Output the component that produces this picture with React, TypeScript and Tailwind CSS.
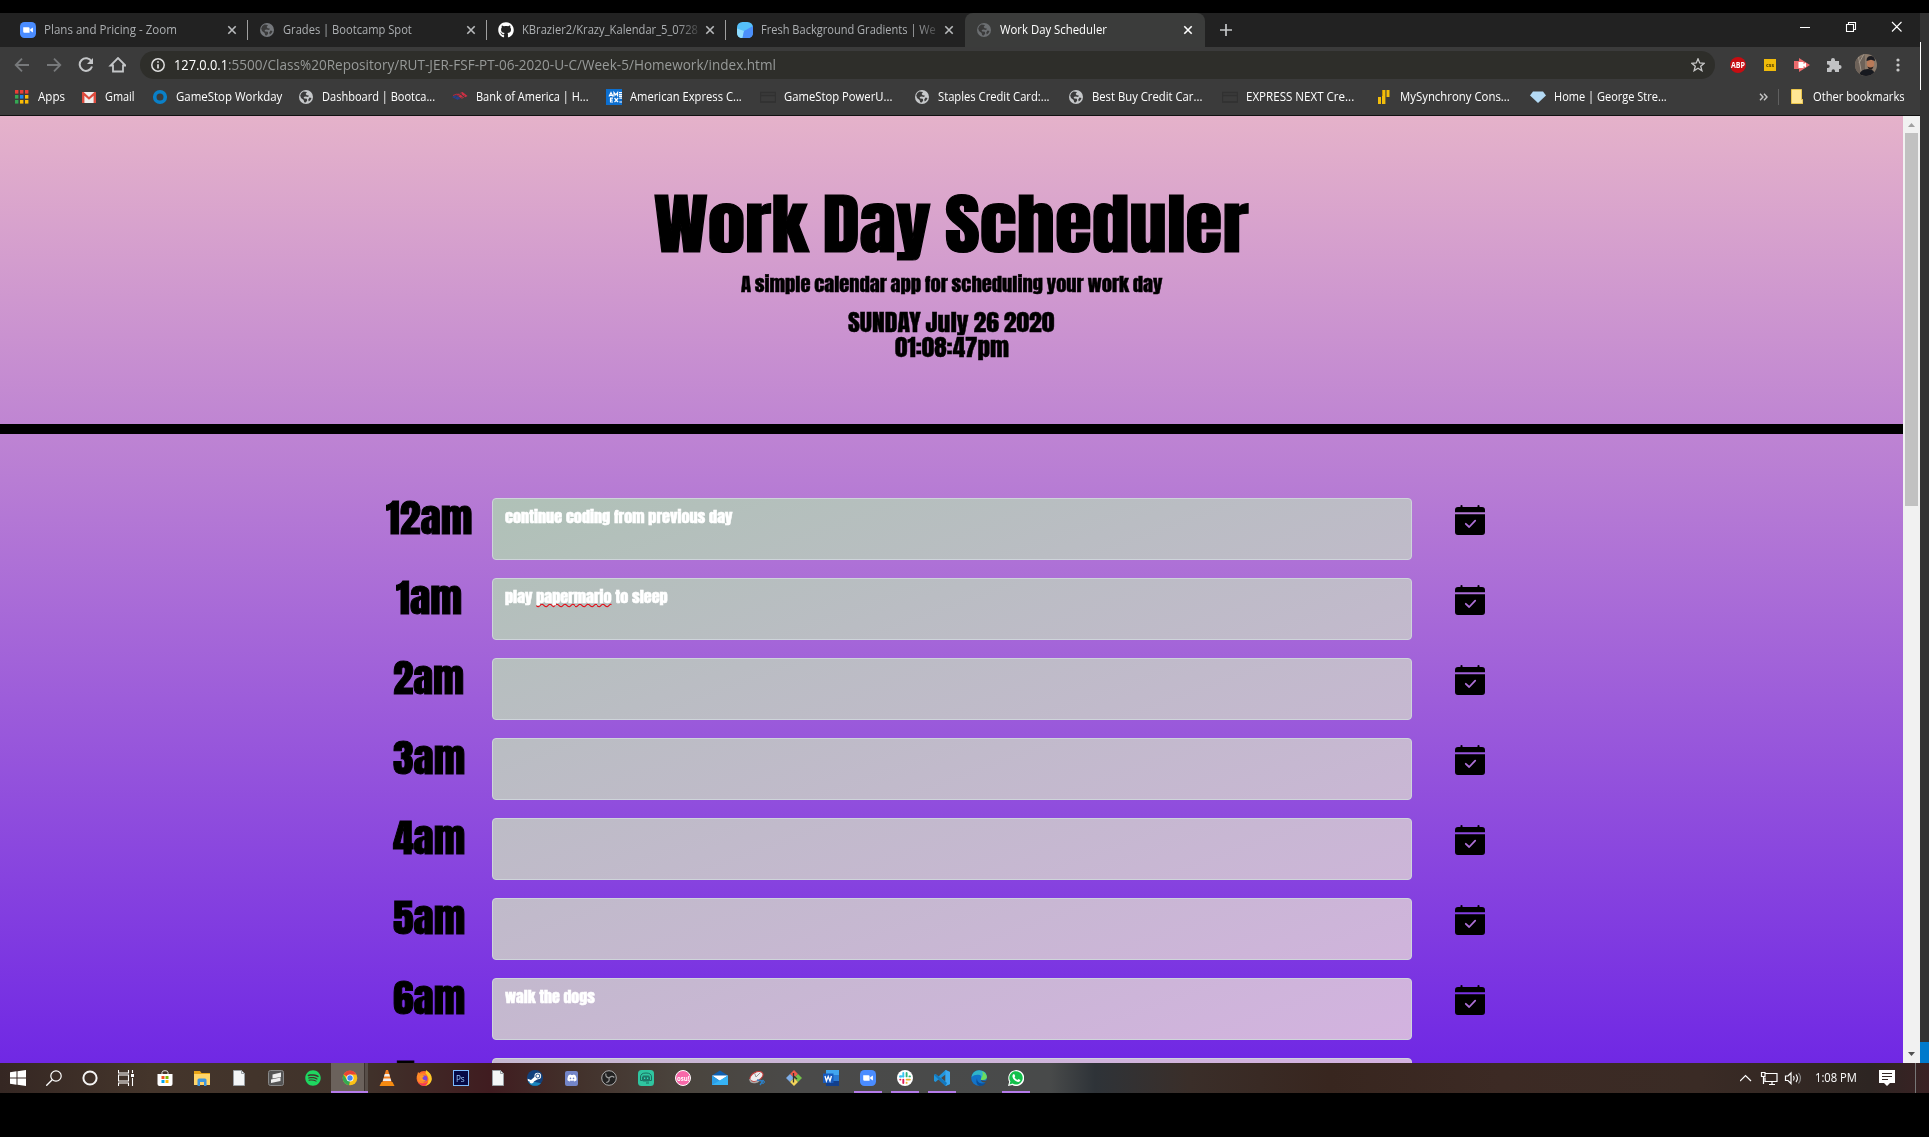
import { useLayoutEffect, useRef } from "react";
import type { ReactNode } from "react";
import { FaGithub, FaSpotify, FaWhatsapp, FaSteam, FaDiscord } from "react-icons/fa";

/* Text stretched horizontally to an exact width. */
function Fit({ w, className = "", children }: { w: number; className?: string; children: ReactNode }) {
  const ref = useRef<HTMLSpanElement>(null);
  useLayoutEffect(() => {
    const el = ref.current;
    if (el) el.style.transform = `scaleX(${w / el.offsetWidth})`;
  }, [w]);
  return (
    <span className={`block shrink-0 whitespace-nowrap ${className}`} style={{ width: w }}>
      <span ref={ref} className="inline-block origin-left">{children}</span>
    </span>
  );
}

const ui = "font-['Open_Sans',sans-serif]";
const impact = "font-['Anton','Roboto_Condensed',sans-serif]";

/* ---------- small icons ---------- */
const Globe = ({ c }: { c: string }) => (
  <svg width="16" height="16" viewBox="0 0 16 16">
    <circle cx="8" cy="8" r="7" fill={c} />
    <path d="M2.200 6.500Q3 3.500 5.500 2.600L9 3 7.600 5l1.200 1.200 2 .4-.6 1.400-2.600-.6-2 .6.6 1.400 2.600.4.4 1.600-1.400 2.200-1.600-.4-.6-2.200L3 9Z" fill="#3a3a3a" />
    <path d="M11.500 8.600l2 .4q-.6 2.400-2.700 3.600l-.6-1.800Z" fill="#3a3a3a" />
  </svg>
);
const ZoomIcon = ({ s = 16 }: { s?: number }) => (
  <svg width={s} height={s} viewBox="0 0 16 16">
    <rect width="16" height="16" rx="4.500" fill="#4a8cff" />
    <path d="M3.200 5.300h5.200q1.200 0 1.200 1.200v4.200H4.400q-1.200 0-1.200-1.200ZM10.200 7.200l2.700-1.700v5l-2.700-1.700Z" fill="#fff" />
  </svg>
);
const Gradients = () => (
  <svg width="16" height="16" viewBox="0 0 16 16">
    <rect width="16" height="16" rx="5.500" fill="#55c0fa" />
    <path d="M0 6.500 7 9 5.500 16Q0 16 0 10.500Z" fill="#8fdcff" />
    <path d="M7 9 16 4v6.500Q16 16 10.500 16h-5Z" fill="#4b8ffb" />
  </svg>
);
const CloseX = ({ c }: { c: string }) => (
  <svg width="10" height="10" viewBox="0 0 10 10"><path d="M1.300 1.300l7.400 7.400M8.700 1.300 1.300 8.700" stroke={c} strokeWidth="1.600" /></svg>
);
const AppsIcon = () => (
  <svg width="16" height="16" viewBox="0 0 16 16">
    {["#ea3f35", "#ea3f35", "#ea3f35", "#34a853", "#1a86f0", "#fbbc05", "#34a853", "#fbbc05", "#fbbc05"].map((c, i) => (
      <rect key={i} x={1 + (i % 3) * 5} y={1 + Math.floor(i / 3) * 5} width="3.400" height="3.600" fill={c} />
    ))}
  </svg>
);
const GmailIcon = () => (
  <svg width="16" height="16" viewBox="0 0 16 16">
    <path d="M1 3h14v11H1Z" fill="#efefef" />
    <path d="M1 3h1.600L8 8l5.400-5H15v11h-2.400V6.800L8 10.800 3.400 6.800V14H1Z" fill="#dd4b3e" />
  </svg>
);
const Ring = () => (
  <svg width="16" height="16" viewBox="0 0 16 16"><circle cx="8" cy="8" r="5.300" fill="none" stroke="#0a80c8" strokeWidth="3.600" /></svg>
);
const Boa = () => (
  <svg width="16" height="16" viewBox="0 0 16 16">
    <path d="M0 8 4 6l5 3.500-3 1.500Z" fill="#27408b" />
    <path d="M4.500 5.800 7 4.500l5 4L9.800 9.800ZM8 4l2.500-1L15.500 7l-2.300 1.200Z" fill="#d02f44" />
    <path d="M6 11l7-4.500M3 8.500l7-4" stroke="#3b3b3b" strokeWidth=".7" />
    <path d="M1 6.500 5 5l2 1" fill="none" stroke="#b52a3c" />
  </svg>
);
const Amex = () => (
  <svg width="16" height="16" viewBox="0 0 16 16">
    <rect width="16" height="16" fill="#0c6fd0" />
    <path d="M3 7.500 5 3.500l2 4M3.800 6.300h2.400M8 7.500v-4l1.800 2.400 1.800-2.400v4M13 3.700h3M13 5.600h3M13 7.300h3M4 9.200h3M4 11.200h2.600M4 13h3M4.500 9v4M8.500 9l3.600 4.200M12.100 9l-3.600 4.200M13.300 9.200H16M13.300 13H16" stroke="#fff" strokeWidth="1.200" fill="none" />
  </svg>
);
const Card = () => (
  <svg width="16" height="16" viewBox="0 0 16 16"><path d="M.5 3.500h15v9.500H.5ZM.5 6.500h15" fill="none" stroke="#313131" strokeWidth="1.300" /></svg>
);
const Synchrony = () => (
  <svg width="16" height="16" viewBox="0 0 16 16"><path d="M2 8h3v7H2ZM6 1h3.400v14H6ZM10.500 1h3v7h-3Z" fill="#f2bd0b" /><path d="M6 1h1v6H6Z" fill="#c89600" /></svg>
);
const Gem = () => (
  <svg width="16" height="16" viewBox="0 0 16 16"><path d="M3 2.500h10l3 4-8 7.500-8-7.500Z" fill="#b4daf5" /></svg>
);
const Folder = () => (
  <svg width="12" height="15" viewBox="0 0 12 15">
    <path d="M.5.5h10v10h1.400v4H.5Z" fill="#ffe694" stroke="#eac54c" />
  </svg>
);

/* ---------- browser tabs ---------- */
type TabInfo = { icon: ReactNode; title: string; w: number; clip?: boolean; sep?: boolean };
const tabs: TabInfo[] = [
  { icon: <ZoomIcon />, title: "Plans and Pricing - Zoom", w: 133, sep: true },
  { icon: <Globe c="#75787c" />, title: "Grades | Bootcamp Spot", w: 129, sep: true },
  { icon: <FaGithub size={16} color="#fff" />, title: "KBrazier2/Krazy_Kalendar_5_0728", w: 176, clip: true, sep: true },
  { icon: <Gradients />, title: "Fresh Background Gradients | We", w: 175, clip: true },
];

function TabStrip() {
  return (
    <div className="flex h-[34px] bg-[#222222]">
      <div className="flex pl-[9px]">
        {tabs.map((t) => (
          <div key={t.title} className="flex w-[239px] items-center">
            <div className="ml-[11px] w-6 shrink-0">{t.icon}</div>
            <div className={`w-[180px] text-[#acafb2] ${t.clip ? "[mask-image:linear-gradient(to_right,#000_155px,transparent_182px)]" : ""}`}>
              <Fit w={t.w} className="text-[12px]">{t.title}</Fit>
            </div>
            <div className="ml-[3px] w-5"><CloseX c="#b9bbbd" /></div>
            {t.sep && <div className="h-5 w-px shrink-0 bg-[#a0a0a0]" />}
          </div>
        ))}
      </div>
      <div className="flex w-[240px] items-center rounded-t-lg bg-[#3b3c3b] pl-[11px]">
        <div className="w-6"><Globe c="#6c6f72" /></div>
        <div className="w-[183px] text-white"><Fit w={107} className="text-[12px]">Work Day Scheduler</Fit></div>
        <CloseX c="#fff" />
      </div>
      <svg className="ml-[14px] mt-[10px]" width="14" height="14" viewBox="0 0 14 14"><path d="M7 1v12M1 7h12" stroke="#c4c6c8" strokeWidth="1.700" /></svg>
      <div className="ml-auto flex pt-[8px] pr-[18px]">
        <svg width="102" height="12" viewBox="0 0 102 12" fill="none" stroke="#fff" strokeWidth="1.100">
          <path d="M0 6.500h10M46.500 3.500h7v7h-7ZM48.500 3V1.500h7v7H54M92 1l9.500 9.500M101.500 1 92 10.500" />
        </svg>
      </div>
    </div>
  );
}

/* ---------- toolbar ---------- */
function Toolbar() {
  return (
    <div className="flex h-[36px] items-center bg-[#3b3b3b]">
      <svg className="ml-[14px]" width="112" height="16" viewBox="0 0 112 16" fill="none" strokeWidth="1.800">
        <path d="M15 8H2M8 1.700 1.700 8 8 14.300" stroke="#77797b" />
        <path d="M33 8h13M40 1.700 46.300 8 40 14.300" stroke="#77797b" />
        <path d="M77.500 4.500A6.300 6.300 0 1 0 78 9.500" stroke="#c4c6c8" strokeWidth="2" />
        <path d="M79 1v6h-6Z" fill="#c4c6c8" />
        <path d="M99 14.500v-6h-2.500L104 1l7.500 7.500H109v6Z" stroke="#c4c6c8" />
      </svg>
      <div className="ml-[14px] flex h-[28px] w-[1575px] items-center rounded-full bg-[#2e2e2a]">
        <svg className="ml-[11px] mr-[9px] shrink-0" width="14" height="14" viewBox="0 0 14 14">
          <circle cx="7" cy="7" r="6.200" fill="none" stroke="#dedede" strokeWidth="1.500" />
          <path d="M7 6.200v4.300M7 3.200v1.600" stroke="#dedede" strokeWidth="1.700" />
        </svg>
        <Fit w={54} className="text-[14px] leading-[20px] text-white">127.0.0.1</Fit>
        <Fit w={548} className="text-[14px] leading-[20px] text-[#979a99]">:5500/Class%20Repository/RUT-JER-FSF-PT-06-2020-U-C/Week-5/Homework/index.html</Fit>
        <svg className="ml-auto mr-[10px]" width="14" height="14" viewBox="0 0 14 14">
          <path d="M7 .8l1.700 4.200 4.500.3-3.500 2.900 1.200 4.500L7 10.200l-3.900 2.500 1.200-4.500L.8 5.300l4.500-.3Z" fill="none" stroke="#c8c8c8" strokeWidth="1.300" />
        </svg>
      </div>
      <div className="ml-[15px] flex h-4 w-4 items-center justify-center rounded-full bg-[#c70d12]">
        <Fit w={14} className="text-[8px] font-bold leading-none text-white">ABP</Fit>
      </div>
      <div className="ml-[18px] flex h-[12px] w-[12px] items-center justify-center bg-[#f0bb0a]">
        <Fit w={8} className="text-[6px] font-bold leading-none text-[#4c3b00]">css</Fit>
      </div>
      <svg className="ml-[18px]" width="16" height="14" viewBox="0 0 16 14">
        <path d="M0 3h5V0l11 7-11 7v-3H0Z" fill="#ec6a6c" /><path d="M4.500 4h5v2L12 4.500v5L9.500 8v2h-5Z" fill="#fff" />
      </svg>
      <svg className="ml-[16px]" width="16" height="16" viewBox="0 0 16 16">
        <path d="M1 4h4V3a2 2 0 0 1 4 0v1h4v4h.6a2 2 0 0 1 0 4H13v3H9v-1a1.700 1.700 0 0 0-3.400 0v1H1v-4h1a1.700 1.700 0 0 0 0-3.400H1Z" fill="#c1c2c4" />
      </svg>
      <svg className="ml-[13px]" width="22" height="22" viewBox="0 0 22 22">
        <clipPath id="avatar"><circle cx="11" cy="11" r="11" /></clipPath>
        <g clipPath="url(#avatar)">
          <rect width="22" height="22" fill="#8a7a6b" />
          <path d="M0 6 10 1v18H0Z" fill="#6d6259" />
          <path d="M3 0l4 22M9 0 4 9" stroke="#a3978a" />
          <path d="M4 22q1-7 9-7 7 0 7 7Z" fill="#17191f" />
          <ellipse cx="15.500" cy="9.500" rx="3.800" ry="5" fill="#b97a58" />
          <path d="M11.500 7q0-5 4.500-5 4 0 4 5l-4-1.200Z" fill="#1b1c22" />
          <path d="M12.500 12.500q3 2 6 0l-1.500 3h-3Z" fill="#251c1a" />
        </g>
      </svg>
      <svg className="ml-[19px]" width="4" height="14" viewBox="0 0 4 14" fill="#c8c8c8"><circle cx="2" cy="2" r="1.600" /><circle cx="2" cy="7" r="1.600" /><circle cx="2" cy="12" r="1.600" /></svg>
    </div>
  );
}

/* ---------- bookmarks ---------- */
const bookmarks: [ReactNode, string, number, string][] = [
  [<AppsIcon />, "Apps", 27, "w-[67px]"],
  [<GmailIcon />, "Gmail", 30, "w-[71px]"],
  [<Ring />, "GameStop Workday", 106, "w-[146px]"],
  [<Globe c="#c6c8ca" />, "Dashboard | Bootca...", 113, "w-[154px]"],
  [<Boa />, "Bank of America | H...", 113, "w-[154px]"],
  [<Amex />, "American Express C...", 112, "w-[154px]"],
  [<Card />, "GameStop PowerU...", 108, "w-[154px]"],
  [<Globe c="#c6c8ca" />, "Staples Credit Card:...", 112, "w-[154px]"],
  [<Globe c="#c6c8ca" />, "Best Buy Credit Car...", 110, "w-[154px]"],
  [<Card />, "EXPRESS NEXT Cre...", 108, "w-[154px]"],
  [<Synchrony />, "MySynchrony Cons...", 110, "w-[154px]"],
  [<Gem />, "Home | George Stre...", 113, "w-[154px]"],
];

function Bookmarks() {
  return (
    <div className="flex h-[33px] items-center border-b border-[#111] bg-[#3b3b3b] pb-[5px] pl-[14px] text-[12px] text-white">
      {bookmarks.map(([icon, label, w, cls]) => (
        <div key={label} className={`flex shrink-0 items-center gap-2 ${cls}`}>{icon}<Fit w={w}>{label}</Fit></div>
      ))}
      <svg className="ml-[75px]" width="9" height="8" viewBox="0 0 9 8"><path d="M1 .8 4 4 1 7.200M5 .8 8 4 5 7.200" fill="none" stroke="#c8c8c8" strokeWidth="1.400" /></svg>
      <div className="ml-[10px] h-4 w-px bg-[#606060]" />
      <div className="ml-3 flex items-center gap-[10px]"><Folder /><Fit w={92}>Other bookmarks</Fit></div>
    </div>
  );
}

/* ---------- scheduler page ---------- */
const hours: [string, number, ReactNode][] = [
  ["12am", 86, <Fit w={228}>continue coding from previous day</Fit>],
  ["1am", 66, <Fit w={163}>play <span className="underline decoration-red-600 decoration-wavy decoration-[0.8px] underline-offset-0 [text-decoration-skip-ink:none]">papermario</span> to sleep</Fit>],
  ["2am", 71, null],
  ["3am", 72, null],
  ["4am", 72, null],
  ["5am", 72, null],
  ["6am", 72, <Fit w={90}>walk the dogs</Fit>],
  ["7am", 66, null],
];

const SaveIcon = () => (
  <svg width="30" height="30" viewBox="0 0 30 30">
    <path d="M5.500 2V.8q0-.8 1-.8t1 .8V2h15V.8q0-.8 1-.8t1 .8V2H27q3 0 3 3v2.200H0V5q0-3 3-3ZM0 9.300h30V27q0 3-3 3H3q-3 0-3-3Z" />
    <path d="M10.800 18.800l3.400 3.200 6-6.400" fill="none" stroke="#ae70d8" strokeWidth="1.800" strokeLinecap="round" strokeLinejoin="round" />
  </svg>
);

function Page() {
  return (
    <div className={`h-[947px] w-[1903px] overflow-hidden bg-[linear-gradient(to_top,#7028e4,#e5b2ca)] text-black ${impact}`}>
      <header className="flex h-[318px] flex-col items-center border-b-[10px] border-black pt-[63px]">
        <Fit w={595} className="text-[66px] leading-[90px] [word-spacing:-3px] [-webkit-text-stroke:1.2px_#000]">Work Day Scheduler</Fit>
        <Fit w={422} className="text-[18.5px] leading-[30px] [word-spacing:-1px] [-webkit-text-stroke:0.4px_#000]">A simple calendar app for scheduling your work day</Fit>
        <Fit w={207} className="mt-[11px] text-[22.7px] leading-[25px] [word-spacing:-1px] [-webkit-text-stroke:0.4px_#000]">SUNDAY July 26 2020</Fit>
        <Fit w={114} className="text-[22.7px] leading-[25px] [-webkit-text-stroke:0.4px_#000]">01:08:47pm</Fit>
      </header>
      <main className="flex flex-col gap-[18px] pt-16">
        {hours.map(([h, w, note]) => (
          <div key={h} className="flex h-[62px] shrink-0 pl-[365px]">
            <div className="flex w-[127px] justify-center">
              <Fit w={w} className="text-[37px] leading-[41px] [-webkit-text-stroke:0.9px_#000]">{h}</Fit>
            </div>
            <div className="w-[920px] rounded border border-[#ced4da] bg-[linear-gradient(160deg,rgb(153,203,157),rgb(219,175,233))] bg-fixed bg-[size:1903px_947px] bg-[position:0_116px] pl-3 pt-[6px] text-[14.8px] leading-[24px] text-white [-webkit-text-stroke:0.5px_#fff]">
              {note}
            </div>
            <div className="ml-[43px] pt-[7px]"><SaveIcon /></div>
          </div>
        ))}
      </main>
    </div>
  );
}

function Scrollbar() {
  return (
    <div className="flex h-[947px] w-[17px] flex-col items-center bg-[#f1f1f1]">
      <svg width="17" height="17" viewBox="0 0 17 17"><path d="M5 11h7L8.500 7Z" fill="#a0a0a0" /></svg>
      <div className="h-[373px] w-[13px] bg-[#c1c1c1]" />
      <svg className="mt-auto" width="17" height="17" viewBox="0 0 17 17"><path d="M5 6h7l-3.500 4Z" fill="#505050" /></svg>
    </div>
  );
}

/* ---------- taskbar ---------- */
const File = () => <svg width="12" height="16" viewBox="0 0 12 16"><path d="M.5.5h8l3 3v12H.5Z" fill="#f4f6f7" stroke="#9aa0a5" /><path d="M8.500.5v3h3" fill="none" stroke="#9aa0a5" /></svg>;
const S = ({ children }: { children: ReactNode }) => <svg width="16" height="16" viewBox="0 0 16 16">{children}</svg>;

const systemIcons: ReactNode[] = [
  <S><path d="M0 2.300 6.500 1.300V7.500H0ZM7.500 1.200 16 0v7.500H7.500ZM0 8.500h6.500v6.200L0 13.800ZM7.500 8.500H16V16l-8.500-1.200Z" fill="#fff" /></S>,
  <S><circle cx="10" cy="6" r="5.200" fill="none" stroke="#fff" strokeWidth="1.200" /><path d="M6.200 9.800.3 15.700" stroke="#fff" strokeWidth="1.300" /></S>,
  <S><circle cx="8" cy="8" r="6.600" fill="none" stroke="#f5f5f5" strokeWidth="2" /></S>,
  <S><path d="M.5 0v3h10V0M.5 16v-3h10v3M.5 5h10v6H.5ZM14.500 0v3M14.500 8v8" fill="none" stroke="#fff" strokeWidth="1.100" /><path d="M13 4h3v3h-3Z" fill="#fff" /></S>,
];

type App = { icon: ReactNode; open?: boolean };
const apps: App[] = [
  { icon: <S><path d="M5 4V2.500Q5 .7 8 .7t3 1.800V4" fill="none" stroke="#ddd" /><path d="M.5 4h15v10q0 2-2 2h-11q-2 0-2-2Z" fill="#fff" /><path d="M4.500 6h3v3h-3Z" fill="#f25022" /><path d="M8.500 6h3v3h-3Z" fill="#7fba00" /><path d="M4.500 10h3v3h-3Z" fill="#00a4ef" /><path d="M8.500 10h3v3h-3Z" fill="#ffb900" /></S> },
  { icon: <S><path d="M0 1h6l1.500 2H16v12H0Z" fill="#e8a417" /><path d="M0 4h16v11H0Z" fill="#ffd56a" /><path d="M3.500 16V10q0-1.500 1.500-1.500h6q1.500 0 1.500 1.500v6H10v-4H6v4Z" fill="#3f95dc" /></S> },
  { icon: <File /> },
  { icon: <S><rect x=".5" y=".5" width="15" height="15" rx="2" fill="#555" stroke="#888" /><path d="M4.500 4.500l8.500-2v4.500L4.500 8.500ZM3 9.500l9.500-2V11L3 13Z" fill="#eee" /></S> },
  { icon: <FaSpotify size={16} color="#1ed760" /> },
  { icon: <S><circle cx="8" cy="8" r="7.300" fill="#fbc116" /><path d="M8 8 1.600 4.400A7.300 7.300 0 0 1 14.400 4.400H8Z" fill="#ea4335" /><path d="M1.600 4.400 5 10l3 1-1 4.300A7.300 7.300 0 0 1 1.600 4.400Z" fill="#34a853" /><circle cx="8" cy="8" r="3.500" fill="#fff" /><circle cx="8" cy="8" r="2.700" fill="#4285f4" /></S> },
  { icon: <S><path d="M7 0h2l4 13H3Z" fill="#f58220" /><path d="M5.800 4h4.400l.8 2.600H5ZM4.500 8.500h7l.7 2.500H3.800Z" fill="#eee" /><path d="M2.500 12h11l2 4H.5Z" fill="#f58a10" /></S> },
  { icon: <S><circle cx="8" cy="8.500" r="7.400" fill="#ff6a2a" /><path d="M.8 7 2 2l2 2q3-1.500 5 0l1.500 4-4 6-4-1.500Z" fill="#ff8a28" /><path d="M10 0q6.500 4 5.700 10-1 5-7.200 6 3.500-2 4-6Q12.500 6 9.500 3.500Z" fill="#ffc928" /><path d="M2 12q5 3 10 0-2 4-5 3.800-3.500-.8-5-3.800Z" fill="#f5365c" /><circle cx="8.300" cy="8.500" r="3" fill="#7b45d8" /><path d="M3.500 6.500Q6 4.500 8 6.500L6.200 8q.6 2.400 3.800 2.600-3 2-5.500-.6Z" fill="#ff9a28" /></S> },
  { icon: <div className="flex h-4 w-4 items-center justify-center border border-[#7cbcff] bg-[#060a45]"><Fit w={9} className="text-[9px] leading-none text-[#9fd0ff]">Ps</Fit></div> },
  { icon: <File /> },
  { icon: <S><circle cx="8" cy="8" r="8" fill="#11407c" /><path d="M1 11.500A8 8 0 0 0 14 13.300L8 12Z" fill="#1a86bd" /><path d="M.6 8.800 4 10l4.500-4 2.500 3-4 2.500q-.6 2-2.500 2Q2.800 13.300 2.500 11.500L1 11Z" fill="#fff" /><circle cx="10.800" cy="6" r="3.300" fill="#fff" /><circle cx="10.800" cy="6" r="2" fill="none" stroke="#11407c" strokeWidth=".9" /></S> },
  { icon: <div className="flex h-[15px] w-[13px] items-center justify-center rounded-xs bg-[#7385c8]"><FaDiscord size={10} color="#fff" /></div> },
  { icon: <S><circle cx="8" cy="8" r="7.300" fill="#222" stroke="#aaa" /><path d="M8 8Q4 7 5 3.500M8 8q1 4-2.800 4.500M8 8q3-3 5.300-.5" fill="none" stroke="#999" strokeWidth="1.200" /></S> },
  { icon: <S><rect width="16" height="16" rx="3.500" fill="#2fc5a0" /><path d="M2.500 9V7q0-4 5.500-4t5.500 4v2M2.500 7v3.500h2V7M13.500 7v3.500h-2V7" fill="none" stroke="#1b6f60" /><rect x="4.500" y="5.500" width="7" height="6" rx="1" fill="#1f7768" /><path d="M6 7.500h1.200v1.500H6ZM9 7.500h1.200v1.500H9Z" fill="#2fe0b8" /><path d="M8 13h3" stroke="#1b6f60" /></S> },
  { icon: <div className="flex h-4 w-4 items-center justify-center rounded-full border border-white bg-[#f868a9]"><Fit w={12} className="text-[7px] font-bold leading-none text-white">osu!</Fit></div> },
  { icon: <S><path d="M0 5.500 8 .5l8 5V7L8 11 0 7Z" fill="#0f5fb0" /><path d="M0 5.500h16L8 11Z" fill="#fff" /><path d="M0 5.500 8 11l8-5.500V15H0Z" fill="#2b9fe8" /><path d="M0 15l16-9.500V15Z" fill="#36b3f5" /></S> },
  { icon: <S><ellipse cx="7.500" cy="6.500" rx="7" ry="4.300" fill="#eee" stroke="#c83a3a" transform="rotate(-28 7.500 6.500)" /><path d="M1 9q0 4 5 3.500 3-.6 4-2" fill="none" stroke="#a9a9a9" strokeWidth="1.600" /><path d="M7 7l4-4M7 7 5.500 3" stroke="#999" /><path d="M8 10l5.500 1M14.500 10 11 15" stroke="#2c80c8" strokeWidth="1.400" /><circle cx="14" cy="12" r="1.400" fill="none" stroke="#2c80c8" /></S> },
  { icon: <S><path d="M8 0l4 4-4 4-4-4Z" fill="#f05a4a" /><path d="M4 4l4 4-4 4-4-4Z" fill="#7faee8" /><path d="M12 4l4 4-4 4-4-4Z" fill="#75c04a" /><path d="M8 8l4 4-4 4-4-4Z" fill="#f3d55a" /><path d="M7.500 3v9.500M7.500 6 11 9" stroke="#333" strokeWidth="1.300" /></S> },
  { icon: <S><path d="M3 0h13v16H3Z" fill="#2b7cd3" /><path d="M3 0h13v5H3Z" fill="#41a5ee" /><path d="M3 11h13v5H3Z" fill="#123f8c" /><path d="M0 3.500h10.500v9.500H0Z" fill="#185abd" /><path d="M2 6l1.400 5L5.200 6.500 7 11l1.400-5" fill="none" stroke="#fff" strokeWidth="1.300" /></S> },
  { icon: <ZoomIcon />, open: true },
  { icon: <S><circle cx="8" cy="8" r="8" fill="#fff" /><g strokeWidth="1.900" strokeLinecap="round"><path d="M6.300 3v3.500M3 6.500h1" stroke="#36c5f0" /><path d="M3.300 6.400h3" stroke="#36c5f0" /><path d="M9.600 3v3.400M13 6.400h-.6" stroke="#2eb67d" /><path d="M9.600 9.600h3.300M9.600 12.800v.1" stroke="#ecb22e" /><path d="M6.300 9.600V13M3.200 9.600h.2" stroke="#e01e5a" /></g></S>, open: true },
  { icon: <S><path d="M11.500 0 16 2v12l-4.500 2-7-6.500L1.500 12 0 11V5l1.500-1 3 2.500ZM11.500 4.500 7 8l4.500 3.500Z" fill="#2196dc" fillRule="evenodd" /><path d="M11.500 0 16 2v12l-4.500 2Z" fill="#3aa9f0" /><path d="M0 5l1.500-1L13 13l-1.500 3Z" fill="#1478be" /></S>, open: true },
  { icon: <S><circle cx="8" cy="8" r="7.800" fill="#1273c8" /><path d="M.5 7Q2 0 8.500.2 16 .8 15.800 7q-.5 3.500-5 3-1.600-.4-.8-1.500Q11 5 7.500 4.800 3 4.500.5 7Z" fill="#30b4c8" /><path d="M11 1.200Q16.500 4 15.700 8q-1 2.500-5 2-1.400-.4-.6-1.600Q13 5 11 1.200Z" fill="#6ddc5c" /><path d="M6 8q-.5 5 5 5.400 2 0 3.800-1Q13 16 8.500 15.900 4 14 6 8Z" fill="#0b4f97" /><path d="M10 10q2 1.500 6 .3l-1 2q-5 .5-5-2.300Z" fill="#474949" /></S> },
  { icon: <S><path d="M0 16l1.200-4.200A8 8 0 1 1 4.300 15Z" fill="#fff" /><path d="M1.500 14.500l.9-3A6.700 6.700 0 1 1 4.600 13.600Z" fill="#12c04b" /><path d="M5 4.500q1-1 1.500 0l.7 1.500q0 .5-.7 1.200 1 2 3 2.800l1-1.100q1.800.7 2 1.200-.2 1.700-2 1.900Q6 11.500 4.500 7 4.300 5.500 5 4.500Z" fill="#fff" /></S>, open: true },
];

function Taskbar() {
  return (
    <div className="flex h-[30px] w-full items-center bg-[linear-gradient(to_right,#352723_0,#44352b_150px,#40332b_360px,#401c20_490px,#42302a_570px,#4a443d_680px,#4a4a49_800px,#484a4a_1050px,#2e3338_1095px,#3a2e29_1190px,#38261f_1330px,#3c2a24_1500px,#3a2b25_1700px,#2d2522_1870px,#3a2224_1929px)]">
      {systemIcons.map((icon, i) => <div key={i} className="flex w-9 justify-center">{icon}</div>)}
      <div className="ml-[2px] flex h-full">
        {apps.map((a, i) => (
          <div key={i} className={`relative flex w-[37px] items-center justify-center ${i === 5 ? "border-b-2 border-[#b57bea] bg-[#6b625c] pt-[2px]" : ""}`}>
            {a.icon}
            {i === 5 && <div className="absolute top-0 right-0 h-full w-1 border-l border-[#3c332e] bg-[#574e48]" />}
            {a.open && <div className="absolute bottom-0 h-[2px] w-7 bg-[#b57bea]" />}
          </div>
        ))}
      </div>
      <div className="ml-auto flex h-full items-center">
        <svg width="66" height="16" viewBox="0 0 66 16" fill="none" stroke="#fff" strokeWidth="1.200">
          <path d="M0 11l5.500-5.500L11 11M24.500 3.500H37v8H25v-4M29 14.500h6M32 12v2.500M21.500 2.500h3.500v4h-3.500ZM23.500 7v7" />
          <path d="M45.500 6h2.500l3-3v10.500l-3-3h-2.500ZM53.500 6q1.500 2.200 0 4.500M56 4.500q3 3.800 0 7.500" />
          <path d="M58.500 3q4 5.200 0 10.500" stroke="#888" />
        </svg>
        <Fit w={42} className="ml-[9px] text-[12px] text-white">1:08 PM</Fit>
        <svg className="ml-[22px]" width="16" height="16" viewBox="0 0 16 16"><path d="M0 0h16v13h-5l-3 3-3-3H0Z" fill="#fff" /><path d="M3 3.500h10M3 6.500h10M3 9.500h6" stroke="#332824" strokeWidth="1.100" /></svg>
        <div className="ml-5 mr-[13px] h-full w-px bg-[#777]" />
      </div>
    </div>
  );
}

export default function App() {
  return (
    <div className={`h-[1137px] w-[1929px] overflow-hidden bg-black pt-[13px] ${ui}`}>
      <div className="flex h-[1050px] bg-[#333]">
        <div className="w-[1920px]">
          <TabStrip />
          <Toolbar />
          <Bookmarks />
          <div className="flex"><Page /><Scrollbar /></div>
        </div>
        <div className="flex w-[9px] flex-col justify-between pt-[29px]">
          <div className="h-12 w-px bg-white" />
          <div className="h-[21px] bg-[#007acc]" />
        </div>
      </div>
      <Taskbar />
    </div>
  );
}
